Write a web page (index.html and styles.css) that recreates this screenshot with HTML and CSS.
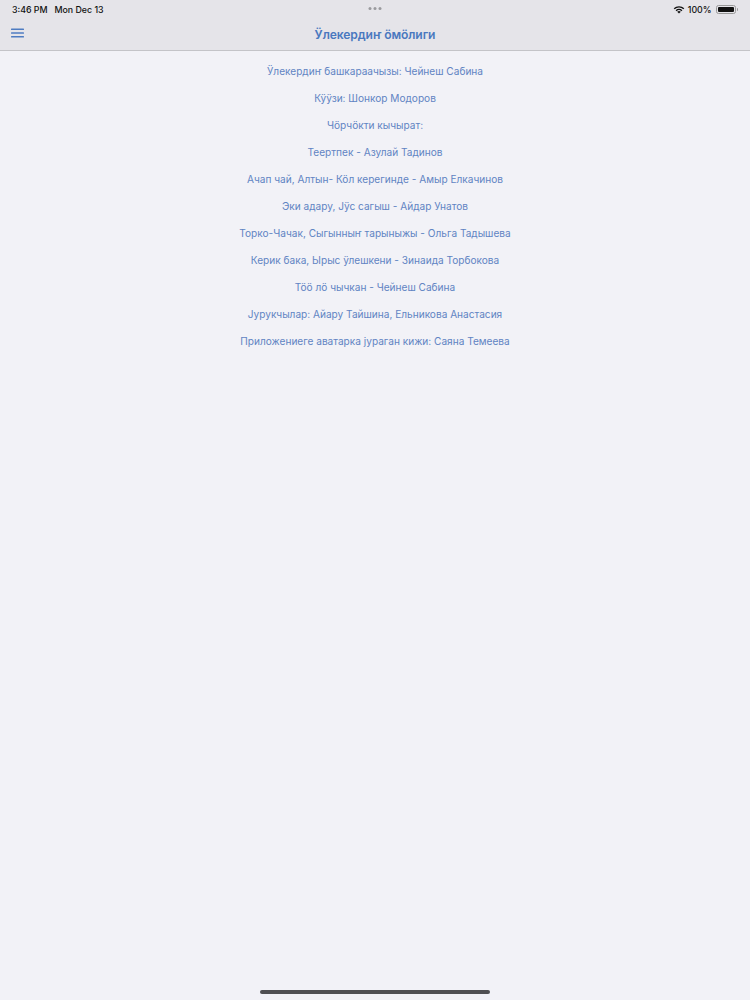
FILE: index.html
```html
<!DOCTYPE html>
<html lang="alt">
<head>
<meta charset="utf-8">
<title>Ӱлекердиҥ ӧмӧлиги</title>
<link rel="stylesheet" href="styles.css">
</head>
<body>
<div class="screen">
  <header class="top">
    <div class="status">
      <div class="status-left"><span class="time">3:46 PM</span><span class="date">Mon Dec 13</span></div>
      <div class="dots"><span></span><span></span><span></span></div>
      <div class="status-right">
        <svg class="wifi" width="12" height="9" viewBox="0 0 12 9"><path d="M6 8.6 L4.2 6.8 A2.6 2.6 0 0 1 7.8 6.8 Z" fill="#111"/><path d="M2.6 5.2 A4.9 4.9 0 0 1 9.4 5.2 L8.4 6.2 A3.5 3.5 0 0 0 3.6 6.2 Z" fill="#111"/><path d="M0.7 3.3 A7.6 7.6 0 0 1 11.3 3.3 L10.3 4.3 A6.2 6.2 0 0 0 1.7 4.3 Z" fill="#111"/></svg>
        <span class="pct">100%</span>
        <span class="battery"><span class="fill"></span></span><span class="nub"></span>
      </div>
    </div>
    <nav class="navbar">
      <button class="menu" aria-label="menu">
        <svg width="13" height="10" viewBox="0 0 13 10"><rect x="0" y="0.5" width="13" height="1.6" rx="0.6" fill="#4f7cc2"/><rect x="0" y="4.2" width="13" height="1.6" rx="0.6" fill="#4f7cc2"/><rect x="0" y="7.9" width="13" height="1.6" rx="0.6" fill="#4f7cc2"/></svg>
      </button>
      <h1 class="title">Ӱлекердиҥ ӧмӧлиги</h1>
    </nav>
  </header>
  <main class="credits">
    <p>Ӱлекердиҥ башкараачызы: Чейнеш Сабина</p>
    <p>Кӱӱзи: Шонкор Модоров</p>
    <p>Чӧрчӧкти кычырат:</p>
    <p>Теертпек - Азулай Тадинов</p>
    <p>Ачап чай, Алтын- Кӧл керегинде - Амыр Елкачинов</p>
    <p>Эки адару, Јӱс сагыш - Айдар Унатов</p>
    <p>Торко-Чачак, Сыгынныҥ тарыныжы - Ольга Тадышева</p>
    <p>Керик бака, Ырыс ӱлешкени - Зинаида Торбокова</p>
    <p>Тӧӧ лӧ чычкан - Чейнеш Сабина</p>
    <p>Јурукчылар: Айару Тайшина, Ельникова Анастасия</p>
    <p>Приложениеге аватарка јураган кижи: Саяна Темеева</p>
  </main>
  <div class="home-indicator"></div>
</div>
</body>
</html>
```
FILE: styles.css
```css
* { box-sizing: border-box; }
html, body { margin: 0; padding: 0; }
body {
  font-family: Inter, "Noto Sans", "DejaVu Sans", sans-serif;
  background: #f2f2f7;
}
.screen {
  width: 750px;
  height: 1000px;
  display: flex;
  flex-direction: column;
  position: relative;
  background: #f2f2f7;
  overflow: hidden;
}
.top {
  background: #e5e4e9;
  border-bottom: 1px solid #c4c4c8;
}
.status {
  height: 18px;
  display: flex;
  align-items: center;
  justify-content: space-between;
  padding: 0 12px 0 12px;
  font-size: 8.8px;
  font-weight: 500;
  color: #111;
  position: relative;
}
.status-left { display: flex; gap: 7px; }
.dots {
  position: absolute;
  left: 50%;
  top: 7px;
  transform: translateX(-50%);
  display: flex;
  gap: 2px;
}
.dots span { width: 3px; height: 3px; border-radius: 50%; background: #9a9a9e; }
.status-right { display: flex; align-items: center; gap: 3px; }
.pct { margin-right: 1px; }
.battery {
  width: 20px; height: 9px;
  border: 1px solid #999;
  border-radius: 2.5px;
  padding: 1px;
  display: flex;
}
.battery .fill { flex: 1; background: #111; border-radius: 1px; }
.nub { width: 1.5px; height: 3px; background: #999; margin-left: -2px; border-radius: 0 1px 1px 0; }
.navbar {
  height: 32px;
  display: flex;
  align-items: center;
  justify-content: center;
  position: relative;
}
.menu {
  position: absolute;
  left: 11px;
  top: 10px;
  border: 0;
  background: none;
  padding: 0;
  display: flex;
}
.title {
  margin: 0;
  font-size: 12.1px;
  font-weight: 600;
  color: #4a78bf;
  letter-spacing: -0.1px;
}
.credits {
  padding-top: 7px;
  display: flex;
  flex-direction: column;
  align-items: center;
}
.credits p {
  margin: 0;
  height: 27px;
  line-height: 27px;
  font-size: 10.1px;
  color: #6184c3;
}
.home-indicator {
  position: absolute;
  left: 260px;
  bottom: 6px;
  width: 230px;
  height: 4px;
  border-radius: 2px;
  background: #505053;
}
```
